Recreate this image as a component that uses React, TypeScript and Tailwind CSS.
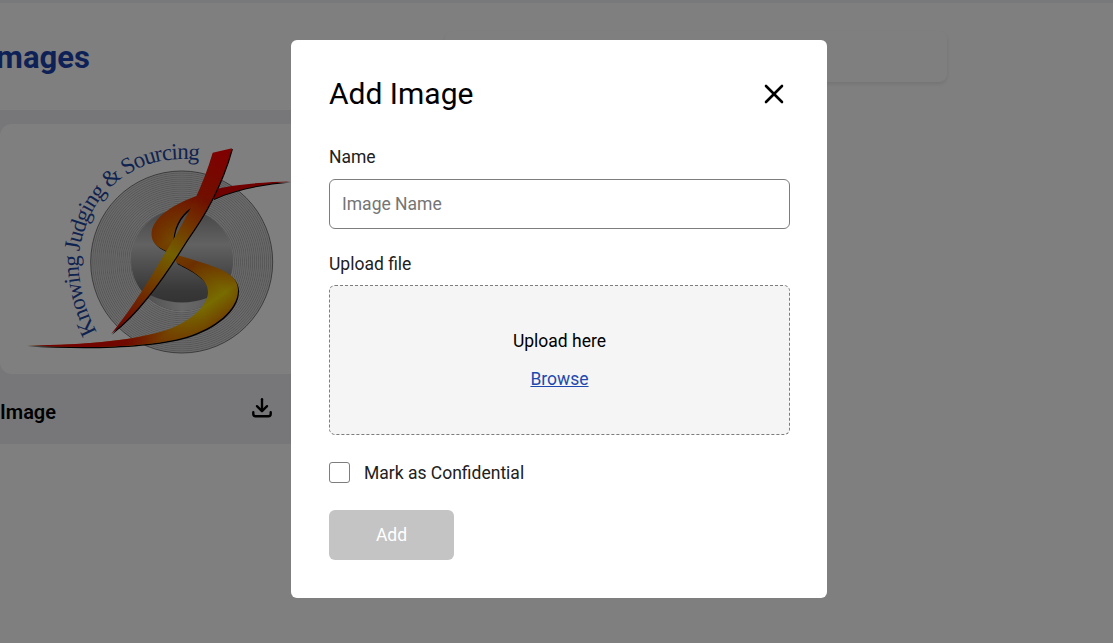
import React from "react";

function Logo() {
  const rings = Array.from({ length: 41 }, (_, i) => 51 + i * 1);
  const blade = "M212.7 152.7 L232 148.3 C222 185 205 215 187 240 C165 275 140 312 111 334 C135 305 152 275 170 245 C190 212 203 185 212.7 152.7 Z";
  const body = "M200 195 C170 205 150 220 151.7 236 C153 250 175 254 200 262 C222 269 238 275 238 290 C238 310 215 328 186 337 C150 347 90 349 26.7 345.3 C90 345 135 340 167 330 C192 321 208 305 208 292 C208 278 190 270 176.7 263 C170 245 172 220 192 207 Z";
  const swoosh = "M212 190 C235 184 265 182 291 181.5 C265 184 238 188 214 199 Z";
  return (
    <svg width="291" height="250" viewBox="0 124 291 250" className="block">
      <defs>
        <linearGradient id="body2" gradientUnits="userSpaceOnUse" x1="150" y1="205" x2="235" y2="325">
          <stop offset="0" stopColor="#d84000" />
          <stop offset="0.27" stopColor="#e8b000" />
          <stop offset="0.5" stopColor="#d86000" />
          <stop offset="0.78" stopColor="#f0d800" />
          <stop offset="1" stopColor="#d85000" />
        </linearGradient>
        <linearGradient id="tail" gradientUnits="userSpaceOnUse" x1="26" y1="345" x2="205" y2="322">
          <stop offset="0" stopColor="#aaaaaa" />
          <stop offset="0.12" stopColor="#ee0000" />
          <stop offset="0.55" stopColor="#e01000" />
          <stop offset="1" stopColor="#e04a00" stopOpacity="0" />
        </linearGradient>
        <linearGradient id="top" gradientUnits="userSpaceOnUse" x1="205" y1="192" x2="165" y2="235">
          <stop offset="0" stopColor="#e00000" />
          <stop offset="1" stopColor="#e04000" stopOpacity="0" />
        </linearGradient>
        <linearGradient id="blade" gradientUnits="userSpaceOnUse" x1="225" y1="150" x2="115" y2="332">
          <stop offset="0" stopColor="#ff0000" />
          <stop offset="0.25" stopColor="#e02000" />
          <stop offset="0.55" stopColor="#e8c000" />
          <stop offset="0.8" stopColor="#e05000" />
          <stop offset="1" stopColor="#e00000" />
        </linearGradient>
        <linearGradient id="sphere" x1="0" y1="0" x2="0" y2="1">
          <stop offset="0" stopColor="#8a8a8a" />
          <stop offset="0.35" stopColor="#c4c4c4" />
          <stop offset="0.8" stopColor="#707070" />
          <stop offset="1" stopColor="#606060" />
        </linearGradient>
        <linearGradient id="wall" x1="0" y1="0" x2="1" y2="0">
          <stop offset="0" stopColor="#909090" />
          <stop offset="0.5" stopColor="#d0d0d0" />
          <stop offset="1" stopColor="#a8a8a8" />
        </linearGradient>
        <clipPath id="hole">
          <circle cx="182" cy="260" r="51" />
        </clipPath>
        <path id="arc" d="M97 332 C78 297 74 258 84 232 C92 205 108 186 130 173 C150 161 175 156 204 161" fill="none" />
      </defs>
      <circle cx="181.7" cy="262" r="91" fill="#dddddd" />
      {rings.map((r, i) => (
        <circle
          key={r}
          cx="181.7"
          cy="262"
          r={r}
          fill="none"
          stroke={i === rings.length - 1 ? "#444444" : i % 2 === 0 ? "#999999" : "#cfcfcf"}
          strokeWidth="0.7"
        />
      ))}
      <circle cx="182" cy="260" r="51" fill="url(#sphere)" />
      <path d="M130 283 Q182 322 234 283 L234 320 L130 320 Z" fill="url(#wall)" clipPath="url(#hole)" />
      <text fill="#1f46a0" fontFamily="'Liberation Serif', serif" fontSize="23">
        <textPath href="#arc" textLength="252" lengthAdjust="spacing">
          Knowing Judging &amp; Sourcing
        </textPath>
      </text>
      <path d={swoosh} fill="#000000" transform="translate(0 1)" />
      <path d={swoosh} fill="#e00000" />
      <path d={body} fill="#000000" transform="translate(1 1.2)" />
      <path d={body} fill="url(#body2)" />
      <path d={body} fill="url(#tail)" />
      <path d={body} fill="url(#top)" />
      <path d={blade} fill="#000000" transform="translate(1 0.8)" />
      <path d={blade} fill="url(#blade)" />
    </svg>
  );
}

export default function App() {
  return (
    <div className="relative h-[643px] w-full overflow-hidden bg-white font-['Roboto',sans-serif]">
      <div className="h-[3px] bg-[#f1f2f5]" />
      <div className="flex h-[107px] items-start">
        <h1 className="-ml-[13px] mt-[35px] w-[458px] text-[31px] leading-[40px] font-bold text-[#1d43ae]">Images</h1>
        <div className="mt-[28px] h-[51px] w-[502px] rounded-lg bg-white shadow-[0_2px_4px_rgba(0,0,0,0.1)]" />
      </div>
      <div className="w-[291px] overflow-hidden bg-[#eeeff4] pt-[14px]">
        <div className="h-[250px] overflow-hidden rounded-l-xl bg-white">
          <Logo />
        </div>
        <div className="flex h-[70px] items-center justify-between pt-[6px] pr-[18px] pl-0">
          <span className="text-[20px] font-semibold text-black">Image</span>
          <svg width="22" height="22" viewBox="0 0 24 24" fill="none" stroke="#000000" strokeWidth="2.6" strokeLinecap="round" strokeLinejoin="round" className="-mt-[8px]">
            <path d="M12 2.5V15" />
            <path d="M6.5 10L12 15.5L17.5 10" />
            <path d="M2.5 16.5V18.5C2.5 20 3.5 21 5 21H19C20.5 21 21.5 20 21.5 18.5V16.5" />
          </svg>
        </div>
      </div>

      <div className="fixed inset-0 flex items-start bg-black/50 pt-[40px] pl-[291px]">
        <div className="flex h-[558px] w-[536px] flex-col rounded-md bg-white px-[38px] pt-[34px]">
          <div className="flex h-[40px] items-center justify-between">
            <h2 className="text-[30px] leading-[40px] font-normal text-black">Add Image</h2>
            <svg width="22" height="22" viewBox="0 0 22 22" fill="none" stroke="#000000" strokeWidth="2.6" strokeLinecap="round" className="mr-[4px]">
              <path d="M3 3L19 19" />
              <path d="M19 3L3 19" />
            </svg>
          </div>
          <label className="mt-[31px] h-[24px] text-[17.5px] leading-[24px] text-[#212121]">Name</label>
          <div className="mt-[10px] flex h-[50px] w-[461px] items-center rounded-md border border-[#7d7d7d] px-[12px] text-[17.5px] text-[#757575]">
            Image Name
          </div>
          <label className="mt-[23px] h-[24px] text-[17.5px] leading-[24px] text-[#212121]">Upload file</label>
          <div className="mt-[9px] flex h-[150px] w-[461px] flex-col items-center rounded-md border border-dashed border-[#7d7d7d] bg-[#f5f5f5] pt-[43px]">
            <span className="text-[17.5px] leading-[24px] text-black">Upload here</span>
            <a className="mt-[14px] text-[17.5px] leading-[24px] text-[#1e4aaf] underline">Browse</a>
          </div>
          <div className="mt-[27px] flex h-[21px] items-center">
            <div className="h-[21px] w-[21px] rounded-[3px] border border-[#7d7d7d] bg-white" />
            <span className="ml-[14px] text-[17.5px] leading-[24px] text-[#212121]">Mark as Confidential</span>
          </div>
          <button className="mt-[27px] h-[50px] w-[125px] rounded-md bg-[#c4c4c4] text-[17.5px] font-normal text-white">Add</button>
        </div>
      </div>
    </div>
  );
}
